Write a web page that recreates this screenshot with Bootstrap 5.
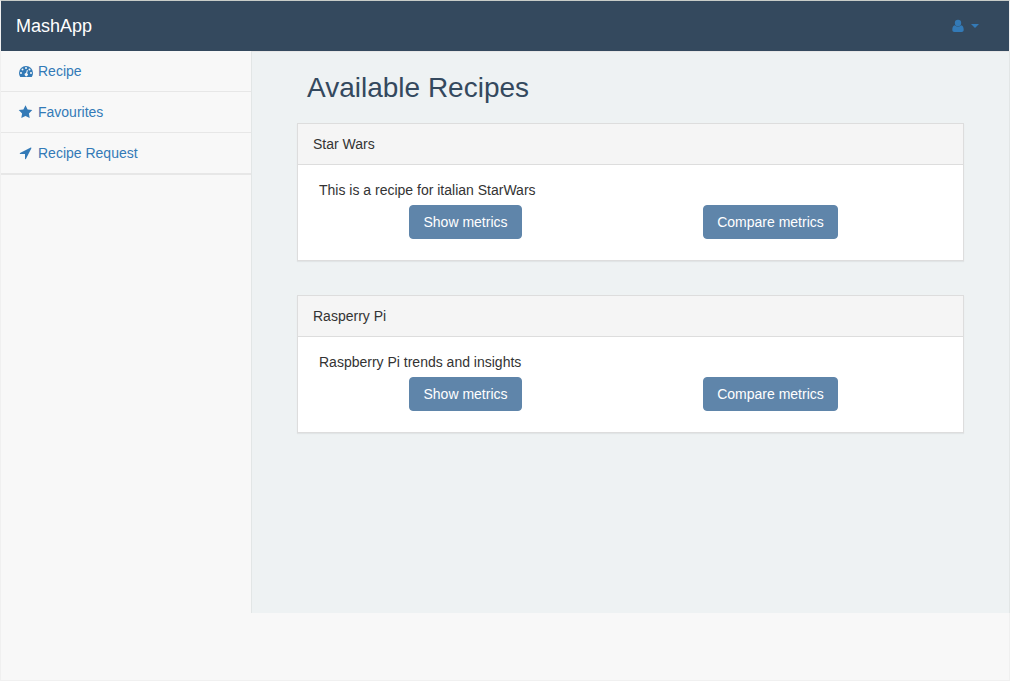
<!DOCTYPE html>
<html lang="en">
<head>
<meta charset="utf-8">
<meta name="viewport" content="width=device-width, initial-scale=1">
<title>MashApp</title>
<link href="https://cdn.jsdelivr.net/npm/bootstrap@5.3.0/dist/css/bootstrap.min.css" rel="stylesheet">
<style>
  body { font-family: "Liberation Sans", Arial, sans-serif; font-size: 14px; line-height: 20px; color: #333; background: #f8f8f8; }
  .app { border: 1px solid #f0f0f0; border-top-color: #c8ccc8; }
  .topbar { background: #34495e; min-height: 50px; padding: 0 30px 0 15px; }
  .topbar .navbar-brand { color: #fff; font-size: 18px; line-height: 20px; }
  .user-menu, .user-menu:hover { color: #337ab7; }
  .user-menu::after { border-top-width: 4px; border-left-width: 4px; border-right-width: 4px; margin-left: 7px; }
  .sidebar { width: 250px; }
  .sidebar .nav { border-bottom: 1px solid #e7e7e7; }
  .sidebar .nav-item { border-bottom: 1px solid #e7e7e7; }
  .sidebar .nav-link { color: #337ab7; padding: 10px 17px; gap: 5px; }
  .content-pane { background: #eef2f3; border-left: 1px solid #e2e6e6; border-right: 1px solid #e2e6e6; border-top: 1px solid #e7e7e7; min-height: 562px; padding: 19px 45px 0; margin-right: -1px; }
  .page-title { color: #34495e; font-size: 28px; line-height: 34px; margin: 0 0 18px; padding-left: 10px; }
  .recipe { border: 1px solid #ddd; border-radius: 0; box-shadow: 0 1px 1px rgba(0,0,0,.05); margin-bottom: 34px; }
  .recipe .card-header { background: #f5f5f5; border-color: #ddd; border-radius: 0; padding: 10px 15px; font-size: 14px; line-height: 20px; }
  .recipe .card-body { padding: 15px 40px 21px 15px; }
  .recipe .card-text { margin: 0 0 5px; padding-left: 6px; }
  .btn-metric { --bs-btn-color: #fff; --bs-btn-bg: #5f85aa; --bs-btn-border-color: #5f85aa; --bs-btn-hover-color: #fff; --bs-btn-hover-bg: #4f7396; --bs-btn-hover-border-color: #4f7396; --bs-btn-padding-x: 13px; --bs-btn-padding-y: 6px; --bs-btn-font-size: 14px; --bs-btn-line-height: 20px; --bs-btn-border-radius: 4px; }
</style>
</head>
<body>
<div class="app min-vh-100">
  <nav class="navbar topbar d-flex justify-content-between">
    <a class="navbar-brand p-0 m-0" href="#">MashApp</a>
    <div class="dropdown">
      <button class="user-menu dropdown-toggle btn border-0 p-0 d-flex align-items-center" type="button" data-bs-toggle="dropdown" aria-label="User menu">
        <svg width="12" height="14" viewBox="0 0 12 14" fill="currentColor" aria-hidden="true"><circle cx="6" cy="4" r="3.200"/><path d="M2.900 6.200C1 6.600.3 8.400.3 10.800.3 12.200 1.100 13 2.400 13h7.200c1.300 0 2.100-.8 2.100-2.200 0-2.400-.7-4.200-2.600-4.600C8.300 7.100 7.200 7.600 6 7.600S3.700 7.100 2.900 6.200z"/></svg>
      </button>
      <ul class="dropdown-menu dropdown-menu-end"></ul>
    </div>
  </nav>
  <div class="d-flex">
    <aside class="sidebar flex-shrink-0">
      <ul class="nav flex-column">
        <li class="nav-item"><a class="nav-link d-flex align-items-center" href="#">
          <svg width="15" height="14" viewBox="0 0 15 14" fill="currentColor" aria-hidden="true"><path fill-rule="evenodd" d="M8 2a7 7 0 0 0-7 7c0 1.300.4 2.600 1.100 3.700.1.200.3.300.5.300h10.800c.2 0 .4-.1.500-.3.700-1.100 1.100-2.400 1.100-3.700a7 7 0 0 0-7-7zM3 8a1 1 0 1 1 0 2 1 1 0 0 1 0-2zM4.500 4.500a1 1 0 1 1 0 2 1 1 0 0 1 0-2zM8 3a1 1 0 1 1 0 2 1 1 0 0 1 0-2zM11.500 4.500a1 1 0 1 1 0 2 1 1 0 0 1 0-2zM13 8a1 1 0 1 1 0 2 1 1 0 0 1 0-2zM8.900 6l1 .2-.8 3.100a1.600 1.600 0 1 1-1-.2z"/></svg>
          Recipe</a></li>
        <li class="nav-item"><a class="nav-link d-flex align-items-center" href="#">
          <svg width="15" height="14" viewBox="0 0 15 14" fill="currentColor" aria-hidden="true"><path d="M7.500 .2l2.100 4.200 4.700.7-3.400 3.300.8 4.700-4.200-2.200-4.200 2.200.8-4.700L.7 5.100l4.700-.7z"/></svg>
          Favourites</a></li>
        <li class="nav-item"><a class="nav-link d-flex align-items-center" href="#">
          <svg width="15" height="14" viewBox="0 0 15 14" fill="currentColor" aria-hidden="true"><path d="M13.400 2.200L7.900 13c-.2.400-.9.300-.9-.2V8H2.200c-.5 0-.6-.7-.2-.9L12.800 1.600c.4-.2.800.2.600.6z"/></svg>
          Recipe Request</a></li>
      </ul>
    </aside>
    <main class="content-pane flex-grow-1">
      <h1 class="page-title fw-normal">Available Recipes</h1>
      <section class="card recipe">
        <div class="card-header">Star Wars</div>
        <div class="card-body">
          <p class="card-text">This is a recipe for italian StarWars</p>
          <div class="row g-0 text-center">
            <div class="col-6"><button type="button" class="btn btn-metric">Show metrics</button></div>
            <div class="col-6"><button type="button" class="btn btn-metric">Compare metrics</button></div>
          </div>
        </div>
      </section>
      <section class="card recipe">
        <div class="card-header">Rasperry Pi</div>
        <div class="card-body">
          <p class="card-text">Raspberry Pi trends and insights</p>
          <div class="row g-0 text-center">
            <div class="col-6"><button type="button" class="btn btn-metric">Show metrics</button></div>
            <div class="col-6"><button type="button" class="btn btn-metric">Compare metrics</button></div>
          </div>
        </div>
      </section>
    </main>
  </div>
</div>
<script src="https://cdn.jsdelivr.net/npm/bootstrap@5.3.0/dist/js/bootstrap.bundle.min.js"></script>
</body>
</html>
